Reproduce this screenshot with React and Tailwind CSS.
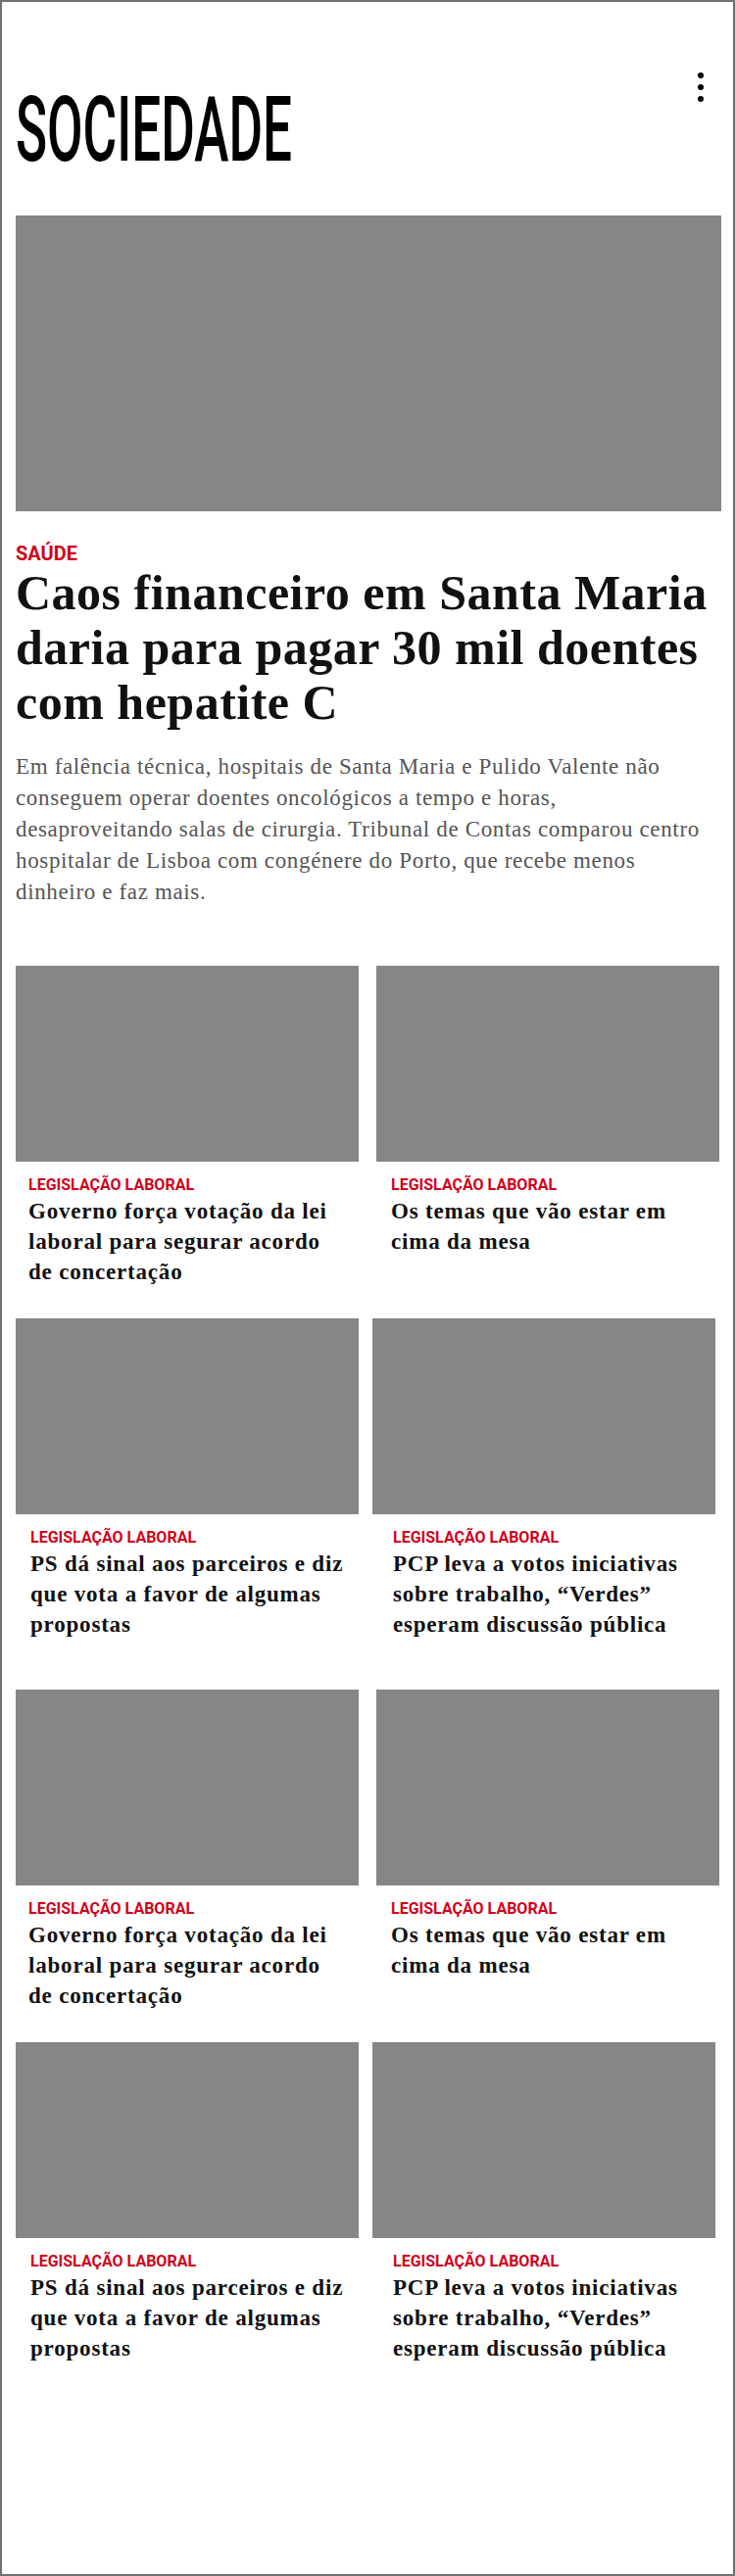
import React from 'react';

const serif = "font-['Liberation_Serif',serif]";
const sans = "font-['Roboto',sans-serif]";

const cards = [
  { title: 'Governo força votação da lei laboral para segurar acordo de concertação' },
  { title: 'Os temas que vão estar em cima da mesa' },
  { title: 'PS dá sinal aos parceiros e diz que vota a favor de algumas propostas' },
  { title: 'PCP leva a votos iniciativas sobre trabalho, “Verdes” esperam discussão pública' },
];

const Card = ({ title, textPad }) => (
  <div>
    <div className="h-[200px] bg-[#868686]" />
    <div className={textPad}>
      <p className={`${sans} mt-[14px] text-[16px] leading-[20px] font-bold text-[#d0021b]`}>
        LEGISLAÇÃO LABORAL
      </p>
      <h3 className={`${serif} mt-[1px] text-[23px] leading-[31px] tracking-[0.8px] font-bold text-[#111]`}>
        {title}
      </h3>
    </div>
  </div>
);

// two slightly different row layouts, as on the page
const RowA = ({ left, right }) => (
  <div className="grid grid-cols-[350px_350px] gap-x-[18px] pb-[32px]">
    <Card title={left} textPad="pl-[13px] pr-[13px]" />
    <Card title={right} textPad="pl-[15px] pr-[11px]" />
  </div>
);

const RowB = ({ left, right }) => (
  <div className="grid grid-cols-[350px_350px] gap-x-[14px] pb-[51px]">
    <Card title={left} textPad="pl-[15px] pr-[11px]" />
    <Card title={right} textPad="pl-[21px] pr-[5px]" />
  </div>
);

export default function App() {
  return (
    <div className="h-[2630px] w-[750px] border-2 border-[#707070] bg-white overflow-hidden">
      <div className="pl-[14px] pr-[12px]">
        <header className="flex items-start justify-between">
          <h1 className={`${sans} mt-[84px] text-[93px] leading-none font-medium text-black origin-left scale-x-[0.57] whitespace-nowrap`}>
            SOCIEDADE
          </h1>
          <svg className="mt-[72px] mr-[18px]" width="6" height="30" viewBox="0 0 6 30" fill="#000">
            <circle cx="3" cy="3" r="3" />
            <circle cx="3" cy="15" r="3" />
            <circle cx="3" cy="27" r="3" />
          </svg>
        </header>

        <section className="mt-[41px]">
          <div className="h-[302px] bg-[#868686]" />
          <p className={`${sans} mt-[31px] text-[20px] leading-[24px] font-bold text-[#d0021b]`}>SAÚDE</p>
          <h2 className={`${serif} text-[50px] leading-[56px] tracking-[0.5px] font-bold text-[#111]`}>
            Caos financeiro em Santa Maria daria para pagar 30 mil doentes com hepatite C
          </h2>
          <p className={`${serif} mt-[22px] text-[23px] leading-[32px] tracking-[0.65px] text-[#555]`}>
            Em falência técnica, hospitais de Santa Maria e Pulido Valente não
            <br />
            conseguem operar doentes oncológicos a tempo e horas,
            <br />
            desaproveitando salas de cirurgia. Tribunal de Contas comparou centro
            <br />
            hospitalar de Lisboa com congénere do Porto, que recebe menos
            <br />
            dinheiro e faz mais.
          </p>
        </section>

        <section className="mt-[59px]">
          <RowA left={cards[0].title} right={cards[1].title} />
          <RowB left={cards[2].title} right={cards[3].title} />
          <RowA left={cards[0].title} right={cards[1].title} />
          <RowB left={cards[2].title} right={cards[3].title} />
        </section>
      </div>
    </div>
  );
}
